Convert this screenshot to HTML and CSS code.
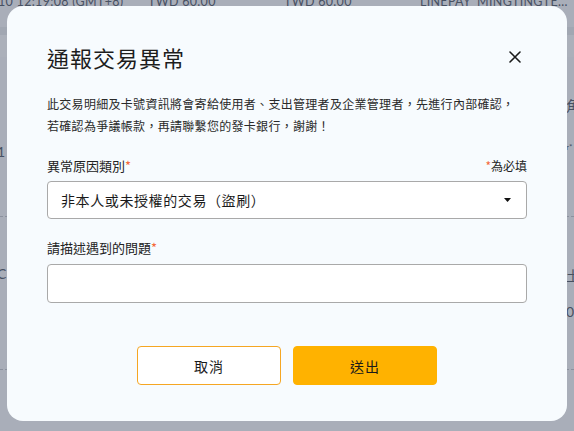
FILE: index.html
```html
<!DOCTYPE html>
<html lang="zh-Hant">
<head>
  <meta charset="UTF-8" />
  <title>通報交易異常</title>
  <link rel="stylesheet" href="styles.css">
</head>
<body>
  <div class="page">
    <div class="row row-top">
      <span class="c-date">10 12:19:08 (GMT+8)</span>
      <span class="c-amt">TWD 60.00</span>
      <span class="c-amt2">TWD 60.00</span>
      <span class="c-shop">LINEPAY_MINGTINGTE...</span>
    </div>
    <div class="row row-head"></div>
    <div class="row row-sub"></div>
    <div class="row row-a">
      <span class="edge-l e1">1</span>
      <span class="edge-r e-top">角</span>
      <span class="edge-r e-mid">r*</span>
    </div>
    <div class="row row-b">
      <span class="edge-l e2">C</span>
      <span class="edge-r e-top2">土</span>
      <span class="edge-r e-mid2">08</span>
    </div>
    <div class="row row-c"></div>
  </div>

  <div class="overlay">
    <div class="modal">
      <div class="modal-head">
        <h1>通報交易異常</h1>
        <button class="close-btn" aria-label="close">
          <svg width="12" height="12" viewBox="0 0 12 12"><path d="M1 1L11 11M11 1L1 11" stroke="#1b1b1b" stroke-width="1.6" stroke-linecap="round"/></svg>
        </button>
      </div>

      <p class="notice">此交易明細及卡號資訊將會寄給使用者、支出管理者及企業管理者，先進行內部確認，<br>若確認為爭議帳款，再請聯繫您的發卡銀行，謝謝！</p>

      <div class="field-label first">
        <span>異常原因類別<i>*</i></span>
        <span class="required"><i>*</i>為必填</span>
      </div>
      <div class="select">
        <span>非本人或未授權的交易（盜刷）</span>
        <svg width="7" height="4" viewBox="0 0 7 4"><path d="M0 0H7L3.5 4Z" fill="#111"/></svg>
      </div>

      <div class="field-label second">
        <span>請描述遇到的問題<i>*</i></span>
      </div>
      <input class="text-input" type="text">

      <div class="actions">
        <button class="btn btn-cancel">取消</button>
        <button class="btn btn-submit">送出</button>
      </div>
    </div>
  </div>
</body>
</html>
```

FILE: styles.css
```css
* { box-sizing: border-box; margin: 0; padding: 0; }
body {
  font-family: 'Noto Sans CJK TC', 'Noto Sans', sans-serif;
  background: #f4f6f9;
  width: 574px;
  height: 431px;
  overflow: hidden;
  position: relative;
}

/* background table (mostly hidden by the dialog) */
.page { font-family: Lato, 'Noto Sans CJK TC', sans-serif; color: #5a6270; }
.row { position: relative; border-bottom: 1px dashed #c4c8ce; }
.row-top { height: 27px; border: none; font-size: 12.5px; }
.row-top span { position: absolute; top: -6px; letter-spacing: 0.3px; }
.c-date { left: -2px; }
.c-amt { left: 148px; }
.c-amt2 { left: 284px; }
.c-shop { left: 420px; }
.row-head { height: 8px; background: #e8eaee; border: none; }
.row-sub { height: 22px; background: #f8f9fb; border: none; }
.row-a { height: 160px; }
.row-b { height: 153px; }
.row-c { height: 60px; border: none; }
.edge-l, .edge-r { position: absolute; font-size: 14px; }
.edge-l { left: -3px; }
.edge-r { left: 566px; }
.e1 { top: 86px; }
.e-top { top: 38px; }
.e-mid { top: 85px; font-size: 8px; }
.e2 { top: 48px; }
.e-top2 { top: 48px; }
.e-mid2 { top: 86px; }

.overlay {
  position: absolute;
  inset: 0;
  background: rgba(40, 52, 75, 0.37);
  padding: 6px 7px 10px 7px;
}

.modal {
  width: 560px;
  height: 415px;
  background: #f7fbfe;
  border-radius: 16px;
  padding: 36px 40px 0 40px;
  color: #222;
}

.modal-head {
  display: flex;
  justify-content: space-between;
  align-items: center;
  height: 30px;
}
.modal-head h1 {
  font-size: 22px;
  font-weight: 400;
  letter-spacing: 1px;
  color: #1d1d1d;
  line-height: 30px;
}
.close-btn {
  width: 24px;
  height: 24px;
  border: none;
  background: transparent;
  display: flex;
  align-items: center;
  justify-content: center;
  cursor: pointer;
}

.notice {
  margin-top: 21px;
  font-size: 12px;
  line-height: 22px;
  letter-spacing: 0.3px;
  color: #2a2a2a;
}

.field-label {
  display: flex;
  justify-content: space-between;
  align-items: flex-end;
  font-size: 13px;
  line-height: 20px;
  color: #222;
}
.field-label i, .required i { color: #f4683a; font-style: normal; }
.field-label.first { margin-top: 19px; }
.field-label.second { margin-top: 19px; }
.required { font-size: 12px; }

.select {
  margin-top: 5px;
  height: 38px;
  background: #fff;
  border: 1px solid #a9a9a9;
  border-radius: 4px;
  display: flex;
  align-items: center;
  justify-content: space-between;
  padding: 0 15px 0 13px;
  font-size: 14px;
  letter-spacing: 0.6px;
  color: #1a1a1a;
}

.text-input {
  display: block;
  width: 100%;
  margin-top: 6px;
  height: 39px;
  background: #fff;
  border: 1px solid #a9a9a9;
  border-radius: 4px;
}

.actions {
  display: flex;
  justify-content: center;
  gap: 12px;
  margin-top: 43px;
}
.btn {
  width: 144px;
  height: 39px;
  border-radius: 4px;
  font-family: 'Noto Sans CJK TC', sans-serif;
  font-size: 14px;
  letter-spacing: 1px;
  color: #1a1a1a;
  cursor: pointer;
}
.btn-cancel { background: #fff; border: 1px solid #f5a623; }
.btn-submit { background: #ffb200; border: 1px solid #ffb200; }
```
